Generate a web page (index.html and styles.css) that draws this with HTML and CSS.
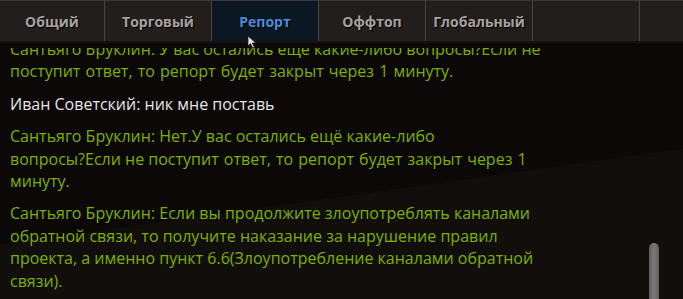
FILE: index.html
```html
<!DOCTYPE html>
<html lang="ru">
<head>
<meta charset="UTF-8">
<meta name="viewport" content="width=device-width, initial-scale=1.0">
<title>Чат</title>
<link rel="stylesheet" href="styles.css">
</head>
<body>

<div class="chat">
  <div class="chat-tabs">
    <div class="tab tab-first">Общий</div>
    <div class="tab">Торговый</div>
    <div class="tab active">Репорт</div>
    <div class="tab">Оффтоп</div>
    <div class="tab">Глобальный</div>
    <div class="tab"></div>
    <div class="tab tab-last"></div>
  </div>

  <div class="chat-log">
    <div class="chat-lines">
      <p class="msg admin">Сантьяго Бруклин: У вас остались еще какие-либо <span class="nowrap">вопросы?Если</span> не <span class="wide">поступит ответ, то репорт будет закрыт через 1 минуту.</span></p>
      <p class="msg player">Иван Советский: ник мне поставь</p>
      <p class="msg admin">Сантьяго Бруклин: Нет.У вас остались ещё какие-либо <span class="nowrap">вопросы?Если</span> не <span class="wide">поступит ответ, то репорт будет закрыт через 1 минуту.</span></p>
      <p class="msg admin">Сантьяго Бруклин: Если вы продолжите злоупотреблять каналами обратной связи, то получите наказание за нарушение правил проекта, а именно пункт 6.6(Злоупотребление каналами обратной связи).</p>
    </div>
    <div class="scrollbar"></div>
  </div>

  <svg class="cursor" width="12" height="14" viewBox="0 0 12 14">
    <path d="M1 1 L1 11 L3.5 8.6 L5.6 13 L7.3 12.2 L5.3 8 L8.8 8 Z" fill="#e8e8e8" stroke="#222" stroke-width="0.8"/>
  </svg>
</div>

</body>
</html>
```

FILE: styles.css
```css
body {
  margin: 0;
  background: #0b0807;
  font-family: "Open Sans", "Noto Sans", sans-serif;
}
.chat {
  position: relative;
  width: 683px;
  height: 299px;
  overflow: hidden;
  background:
    linear-gradient(172deg, transparent 0 62%, #110e0c 62% 100%),
    #0b0807;
}
.chat-tabs {
  display: flex;
  height: 40px;
  background: #221e1c;
  border-top: 1px solid #3a3634;
  border-bottom: 2px solid #151110;
}
.tab {
  width: 106px;
  flex: none;
  border-right: 1px solid #4a4543;
  display: flex;
  align-items: center;
  justify-content: center;
  font-size: 14px;
  font-weight: 700;
  color: #a5a3a2;
  text-shadow: 1px 1px 1px #000;
}
.tab-first {
  width: 104px;
}
.tab-last {
  width: 43px;
  border-right: none;
}
.tab.active {
  background: #0b1824;
  color: #4d8cdc;
}
.chat-log {
  position: relative;
  height: 251px;
  margin-top: 5px;
  overflow: hidden;
}
.chat-lines {
  margin-top: -10px;
  padding: 0 10px;
  width: 538px;
}
.msg {
  margin: 0 0 10px;
  font-size: 16px;
  line-height: 22.4px;
}
.wide {
  word-spacing: 1px;
}
.nowrap {
  white-space: nowrap;
}
.admin {
  color: #7db100;
}
.player {
  color: #e6e6e6;
}
.scrollbar {
  position: absolute;
  left: 649px;
  top: 195px;
  width: 10px;
  height: 80px;
  border-radius: 5px;
  background: linear-gradient(90deg, #5e5e5e, #7a7a7a 50%, #5e5e5e);
}
.cursor {
  position: absolute;
  left: 247px;
  top: 35px;
}
```
